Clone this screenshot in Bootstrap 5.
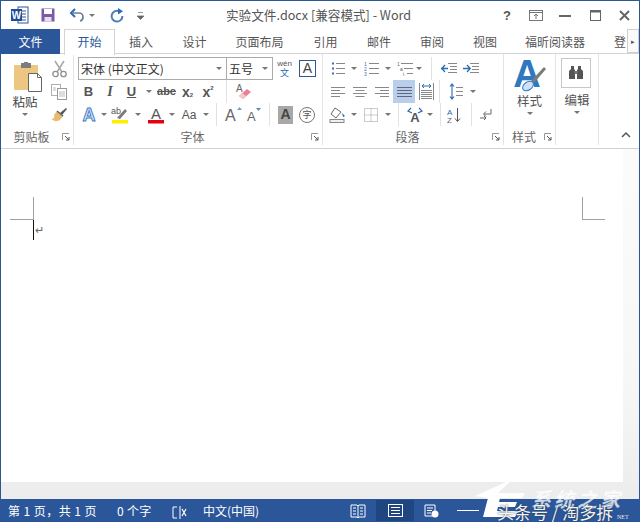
<!DOCTYPE html>
<html lang="zh-CN">
<head>
<meta charset="utf-8">
<title>实验文件.docx - Word</title>
<link rel="stylesheet" href="https://cdn.jsdelivr.net/npm/bootstrap@5.3.0/dist/css/bootstrap.min.css">
<style>
html,body{height:100%;overflow:hidden}
body{font-family:"Noto Sans CJK SC","Liberation Sans",sans-serif;font-size:12px;color:#444;background:#fff}
svg{overflow:visible;flex:none}
.win{width:640px;height:522px;border:1px solid #2b579a;border-bottom:0;position:relative;overflow:hidden;display:flex;flex-direction:column}
.ttl{height:28px;flex:none}
.qat{padding-left:10px}
.ttxt{margin-left:81px;font-size:12.6px;color:#555;width:275px;line-height:28px;white-space:nowrap}
.wctl{color:#666}
.m2{margin-left:2px}.m11{margin-left:11px}.m12{margin-left:12px}.m14{margin-left:14px}.m15{margin-left:15px}.m16{margin-left:16px}
.tabsr{height:25px;flex:none;border-bottom:1px solid #d4d4d4}
.tabsr .nav-link{padding:0;height:25px;line-height:23px;color:#555;font-size:12px;text-align:center;border:1px solid transparent;border-bottom:0;white-space:nowrap}
.tabsr .nav-link.filet{background:#2b579a;color:#fff;width:59px}
.tabsr .nav-link.act{color:#2b579a;background:#fff;border-color:#d4d4d4;height:26px;position:relative;width:51px;margin-left:4px;border-radius:0}
.t2{width:52px}.t3{width:55px}.t4{width:75px}.t5{width:50px}.t6{width:57px}.t7{width:50px}.t8{width:56px}.t9{width:90px}.t10{width:27px;text-align:left!important;padding-left:13px!important;overflow:hidden}
.tscroll{width:12px;height:24px;border:1px solid #cfcfcf;background:#fafafa;font-size:7px;line-height:22px;text-align:center;color:#555}
.ribb{height:95px;flex:none;border-bottom:1px solid #d2d2d2;background:#fff}
.rg{border-right:1px solid #e4e4e4;display:flex;flex-direction:column;flex:none;height:91px;margin-top:0;padding-top:3px}
.rg1{width:73px}.rg2{width:249px}.rg3{width:181px}.rg4{width:52px}.rg5{width:43px}
.rbody{height:71px;flex:none}
.rlab{height:17px;line-height:15px;color:#666;font-size:12px;display:flex;align-items:center;padding-right:3px}
.rlab .lt{flex:1;text-align:center}
.rw{height:23px;display:flex;align-items:center}
.cel{display:flex;align-items:center;justify-content:center;height:23px;flex:none;line-height:1;color:#555}
.car{display:block;width:0;height:0;border-left:3.5px solid transparent;border-right:3.5px solid transparent;border-top:3.5px solid #777}
.vs{display:block;width:1px;height:23px;background:#e2e2e2;flex:none}
.w2{width:2px}.w3{width:3px}.w4{width:4px}.w5{width:5px}.w6{width:6px}.w7{width:7px}.w8{width:8px}.w9{width:9px}.w10{width:10px}.w11{width:11px}.w12{width:12px}.w13{width:13px}.w14{width:14px}.w15{width:15px}.w16{width:16px}.w17{width:17px}.w18{width:18px}.w19{width:19px}.w20{width:20px}.w21{width:21px}.w22{width:22px}.w23{width:23px}.w24{width:24px}.w26{width:26px}
.pl4{padding-left:4px}.pl7{padding-left:7px}
.lat{font-family:"Liberation Sans",sans-serif}
.bld{font-weight:700;font-size:13px}
.xbig{font-weight:700;font-size:14px}
.ital{font-style:italic;font-family:"Liberation Serif",serif;font-weight:700;font-size:14px}
.und{text-decoration:underline;font-weight:700;font-size:13px}
.abc{text-decoration:line-through;font-size:11px;font-weight:700}
.sb{font-size:6px;align-self:flex-end;margin-bottom:5px}.sp{font-size:6px;align-self:flex-start;margin-top:5px}
.fb{height:23px;border:1px solid #ababab;background:#fff;display:flex;align-items:center;justify-content:space-between;padding:0 4px 0 2px;font-size:12px;color:#333;flex:none}
.fb1{width:149px}.fb2{width:47px;margin-left:-1px}
.pcol{width:38px;margin-left:5px;text-align:center}
.psvg{display:block;margin:5px 0 0 8px}
.ptxt{font-size:12.5px;color:#444;line-height:15px;margin-top:2px}
.bigt{font-size:12.5px;line-height:15px;color:#555}
.tcol{width:26px;margin-left:2px}
.jsel{background:#b8cfec}
.bgbox{width:15px;height:18px;background:#a8a8a8;color:#444;font-weight:700;font-size:14px;display:flex;align-items:center;justify-content:center;flex:none}
.circ{width:16px;height:16px;border:1px solid #777;border-radius:50%;font-size:9px;display:flex;align-items:center;justify-content:center;color:#555;flex:none}
.abox{width:17px;height:17px;border:1px solid #2b579a;color:#444;font-size:14px;display:flex;align-items:center;justify-content:center}
.ebox{width:30px;height:30px;border:1px solid #c6c6c6;margin:1px 0 4px 5px;display:flex;align-items:center;justify-content:center}
.ecol{text-align:center}
.chev{width:40px;align-self:flex-end;text-align:center;padding:0 0 6px 13px}
.mid{flex:1;min-height:0}
.docw{flex:1;min-width:0;background:#fff}
.pgm{padding:48px 18px 0 9px}
.cmk{height:23px}
.cmk1{width:24px;border-right:1px solid #a0a0a0;border-bottom:1px solid #a0a0a0}
.cmk2{width:23px;border-left:1px solid #a0a0a0;border-bottom:1px solid #a0a0a0}
.cur{margin-left:32px;height:20px;display:flex;align-items:flex-start}
.cbar{width:1px;height:20px;background:#111}
.pm{font-size:11px;color:#666;line-height:1;margin-top:5px;margin-left:1px}
.vsb{width:16px;flex:none;background:linear-gradient(#fbfbfb,#f7f7f7 70%,#eeeeee)}
.hsb{height:17px;flex:none;background:#ededed}
.stb{height:23px;flex:none;background:#2b579a;color:#fff;font-size:12px;line-height:22px;white-space:nowrap}
.s1{margin-left:7px;width:109px;letter-spacing:.45px}.s2{width:55px;letter-spacing:.3px}.s3{width:31px}.s4{width:143px}
.svw{height:21px;display:flex;align-items:center;justify-content:center}
.sv1{width:30px;justify-content:flex-start;padding-left:4px}.sv2{width:38px;background:#1f4680}.sv3{width:34px}
.zln{width:22px;height:1px;background:#fff;margin-left:9px}
.wm{position:absolute;left:478px;top:488px;width:160px;height:34px;pointer-events:none}
.wmlogo{position:absolute;left:0;top:-8px}
.wm1{position:absolute;left:52px;top:0;font-size:20px;font-style:italic;letter-spacing:3px;color:rgba(255,255,255,.75);line-height:20px;font-weight:700;white-space:nowrap}
.wm2{position:absolute;left:18px;top:13px;font-size:17px;color:#f2f2f2;line-height:20px;text-shadow:0 0 2px #234;white-space:nowrap}
.wm3{position:absolute;left:138px;top:24px;font-size:6px;color:#e8e8e8;line-height:8px;font-family:"Liberation Serif",serif}
</style>
</head>
<body>
<div class="win">
  <!-- title bar -->
  <div class="ttl d-flex align-items-center">
    <div class="qat d-flex align-items-center">
      <svg width="18" height="18" viewBox="0 0 18 18"><rect x="7" y="1" width="10" height="16" fill="#fff" stroke="#2b579a"/><path d="M10 5h5M10 8h5M10 11h5M10 14h5" stroke="#2b579a"/><rect x="0" y="3" width="11" height="12" fill="#204d95"/><text x="5.5" y="12.5" text-anchor="middle" font-size="10" font-weight="700" fill="#fff" font-family="Liberation Sans">W</text></svg>
      <svg class="m12" width="14" height="14" viewBox="0 0 14 14"><rect x=".5" y=".5" width="13" height="13" fill="#7d5aa6"/><rect x="3" y="1" width="8" height="5" fill="#fff"/><rect x="3.5" y="9" width="7" height="4.5" fill="#e6e0ee"/></svg>
      <svg class="m15" width="16" height="14" viewBox="0 0 16 14"><path d="M5 1 1 5l4 4" fill="none" stroke="#2d6cb5" stroke-width="2"/><path d="M2 5h7a4 4 0 0 1 4 4 4 4 0 0 1-3 4" fill="none" stroke="#6a7f99" stroke-width="1.7"/></svg>
      <span class="cel w8 m2"><span class="car"></span></span>
      <svg class="m14" width="14" height="15" viewBox="0 0 14 15"><path d="M9 3.2A5.4 5.4 0 1 0 12.4 8" fill="none" stroke="#4f7fae" stroke-width="2"/><path d="M8 0v6.5l5-3.2z" fill="#2d6cb5"/></svg>
      <span class="cel w10 m11"><svg width="7" height="9" viewBox="0 0 7 9"><path d="M1 1.5h5M0 5h7L3.5 8.500z" fill="#666" stroke="#666" stroke-width=".7"/></svg></span>
    </div>
    <div class="ttxt">实验文件.docx [兼容模式] - Word</div>
    <div class="wctl d-flex align-items-center">
      <span class="cel w12 lat bld">?</span>
      <span class="cel w16 m15"><svg width="14" height="11" viewBox="0 0 14 11"><rect x=".5" y=".5" width="13" height="10" fill="none" stroke="#777"/><path d="M1 2.5h12M7 9V4M5 6l2-2 2 2" stroke="#777" fill="none"/></svg></span>
      <span class="cel w14 m14"><svg width="12" height="3"><rect y="1" width="12" height="2" fill="#666"/></svg></span>
      <span class="cel w14 m16"><svg width="11" height="11"><rect x=".5" y=".5" width="10" height="10" fill="none" stroke="#666"/><rect x=".5" y=".5" width="10" height="2" fill="#666"/></svg></span>
      <span class="cel w14 m15"><svg width="11" height="11" viewBox="0 0 11 11"><path d="M1 1l9 9M10 1l-9 9" stroke="#666" stroke-width="2"/></svg></span>
    </div>
  </div>
  <!-- tabs -->
  <div class="tabsr d-flex">
    <ul class="nav flex-nowrap flex-grow-1">
      <li class="nav-item"><a class="nav-link filet" href="#">文件</a></li>
      <li class="nav-item"><a class="nav-link act" href="#">开始</a></li>
      <li class="nav-item"><a class="nav-link t2" href="#">插入</a></li>
      <li class="nav-item"><a class="nav-link t3" href="#">设计</a></li>
      <li class="nav-item"><a class="nav-link t4" href="#">页面布局</a></li>
      <li class="nav-item"><a class="nav-link t6" href="#">引用</a></li>
      <li class="nav-item"><a class="nav-link t7" href="#">邮件</a></li>
      <li class="nav-item"><a class="nav-link t8" href="#">审阅</a></li>
      <li class="nav-item"><a class="nav-link t5" href="#">视图</a></li>
      <li class="nav-item"><a class="nav-link t9" href="#">福昕阅读器</a></li>
      <li class="nav-item"><a class="nav-link t10" href="#">登</a></li>
    </ul>
    <div class="tscroll">▸</div>
  </div>
  <!-- ribbon -->
  <div class="ribb d-flex">
    <div class="rg rg1">
      <div class="rbody d-flex">
        <div class="pcol">
          <svg class="psvg" width="28" height="30" viewBox="0 0 28 30"><rect x="0" y="3" width="24" height="25" rx="1" fill="#edc682"/><rect x="7" y="1" width="10" height="5" fill="#7d7d7d"/><rect x="10" y="0" width="4" height="3" fill="#7d7d7d"/><path d="M14.500 11.500h9l4 4v14h-13z" fill="#fff" stroke="#666"/><path d="M23.500 11.500v4h4" fill="none" stroke="#666"/></svg>
          <div class="ptxt">粘贴</div>
          <div class="cel w100 h-auto pt-1"><span class="car"></span></div>
        </div>
        <div class="tcol">
          <div class="rw justify-content-center"><svg width="15" height="18" viewBox="0 0 15 18"><path d="M3 1l7 11M12 1 5 12" stroke="#a6a6a6" stroke-width="1.5"/><circle cx="3.5" cy="14" r="2.700" fill="none" stroke="#8f8f8f" stroke-width="1.3"/><circle cx="11.5" cy="14" r="2.700" fill="none" stroke="#8f8f8f" stroke-width="1.3"/></svg></div>
          <div class="rw justify-content-center"><svg width="16" height="16" viewBox="0 0 16 16"><rect x=".5" y=".5" width="9" height="11" fill="#fff" stroke="#b0b0b0"/><rect x="6.5" y="4.5" width="9" height="11" fill="#fff" stroke="#999"/><path d="M8 8h6M8 10h6M8 12h6M2 4h3M2 6h3" stroke="#bbb"/></svg></div>
          <div class="rw justify-content-center"><svg width="17" height="15" viewBox="0 0 17 15"><path d="M9 6l6-5 1 1-5 6z" fill="#555"/><path d="M6 4l6 5-3 4c-3 2-6 1-9-1 3 0 4-2 3-4z" fill="#e7bb6e"/><path d="M6 4l6 5" stroke="#666" stroke-width="1.5"/></svg></div>
        </div>
      </div>
      <div class="rlab"><span class="lt">剪贴板</span><svg width="8" height="8" viewBox="0 0 8 8"><path d="M.5 7V.5H7" fill="none" stroke="#999"/><path d="M3 3l4 4M7 4v3H4" fill="none" stroke="#555"/></svg></div>
    </div>

    <div class="rg rg2">
      <div class="rbody pl4">
        <div class="rw">
          <div class="fb fb1"><span>宋体 (中文正文)</span><span class="car"></span></div>
          <div class="fb fb2"><span>五号</span><span class="car"></span></div>
          <span class="cel w3"></span>
          <span class="cel w17"><svg width="17" height="19" viewBox="0 0 17 19"><text x="8.5" y="7" text-anchor="middle" font-size="8" fill="#555" font-family="Liberation Sans">wén</text><text x="8.5" y="17" text-anchor="middle" font-size="9" fill="#2b6cb0">文</text></svg></span>
          <span class="cel w6"></span>
          <span class="abox lat">A</span>
        </div>
        <div class="rw">
          <span class="cel w21 lat bld">B</span>
          <span class="cel w22 ital">I</span>
          <span class="cel w21 lat und">U</span>
          <span class="cel w14"><span class="car"></span></span>
          <span class="cel w21 lat abc">abc</span>
          <span class="cel w21 lat xbig"><span>x</span><span class="sb">2</span></span>
          <span class="cel w20 lat xbig"><span>x</span><span class="sp">2</span></span>
          <span class="cel w8"></span><span class="vs"></span>
          <span class="cel w9"></span>
          <svg width="16" height="17" viewBox="0 0 16 17"><text x="0" y="9" font-size="10" fill="#666" font-family="Liberation Sans">A</text><path d="M3 13l8-7 4 3-8 7z" fill="#ec7f95"/><path d="M3 13l3-3 4 3-3 3z" fill="#f6c5cf"/></svg>
        </div>
        <div class="rw">
          <span class="cel w21"><svg width="16" height="18" viewBox="0 0 16 18"><text x="8" y="15" text-anchor="middle" font-size="18" font-weight="700" fill="#cfe0f4" stroke="#3f7cc2" stroke-width=".9" font-family="Liberation Sans">A</text></svg></span>
          <span class="cel w9"><span class="car"></span></span>
          <span class="cel w24"><svg width="18" height="18" viewBox="0 0 18 18"><text x="0" y="8" font-size="9" fill="#555" font-family="Liberation Sans">ab</text><path d="M6 12 14 3l2 2-7 8z" fill="#7a7a7a"/><rect x="1" y="14" width="16" height="3.500" fill="#ffef00"/></svg></span>
          <span class="cel w12"><span class="car"></span></span>
          <span class="cel w24"><svg width="16" height="18" viewBox="0 0 16 18"><text x="8" y="13" text-anchor="middle" font-size="15" fill="#555" font-family="Liberation Sans">A</text><rect y="14" width="16" height="3.500" fill="#e60012"/></svg></span>
          <span class="cel w8"><span class="car"></span></span>
          <span class="cel w26 lat">Aa</span>
          <span class="cel w7"><span class="car"></span></span>
          <span class="cel w7"></span><span class="vs"></span>
          <span class="cel w5"></span>
          <span class="cel w22"><svg width="17" height="17" viewBox="0 0 17 17"><text x="0" y="15" font-size="16" fill="#666" font-family="Liberation Sans">A</text><path d="M12 4l2.500-3 2.500 3z" fill="#7a9cc6"/></svg></span>
          <span class="cel w20"><svg width="14" height="15" viewBox="0 0 14 15"><text x="0" y="14" font-size="13" fill="#666" font-family="Liberation Sans">A</text><path d="M9 1h5l-2.500 3z" fill="#6a86aa"/></svg></span>
          <span class="cel w5"></span><span class="vs"></span>
          <span class="cel w8"></span><span class="bgbox lat">A</span>
          <span class="cel w6"></span><span class="circ">字</span>
        </div>
      </div>
      <div class="rlab"><span class="lt">字体</span><svg width="8" height="8" viewBox="0 0 8 8"><path d="M.5 7V.5H7" fill="none" stroke="#999"/><path d="M3 3l4 4M7 4v3H4" fill="none" stroke="#555"/></svg></div>
    </div>

    <div class="rg rg3">
      <div class="rbody pl7">
        <div class="rw">
          <span class="cel w16"><svg width="14" height="14" viewBox="0 0 14 14"><path d="M1 1.500h2M1 6.500h2M1 11.500h2" stroke="#3b6fb0" stroke-width="2"/><path d="M5 1.500h9M5 6.500h9M5 11.500h9" stroke="#888"/></svg></span>
          <span class="cel w16"><span class="car"></span></span>
          <span class="cel w18"><svg width="15" height="15" viewBox="0 0 15 15"><text x="0" y="5" font-size="5" fill="#3b6fb0" font-family="Liberation Sans">1</text><text x="0" y="10" font-size="5" fill="#3b6fb0" font-family="Liberation Sans">2</text><text x="0" y="15" font-size="5" fill="#3b6fb0" font-family="Liberation Sans">3</text><path d="M5 2.500h10M5 7.500h10M5 12.500h10" stroke="#888"/></svg></span>
          <span class="cel w16"><span class="car"></span></span>
          <span class="cel w18"><svg width="16" height="15" viewBox="0 0 16 15"><text x="0" y="5" font-size="5" fill="#3b6fb0" font-family="Liberation Sans">1</text><text x="3" y="10" font-size="5" fill="#555" font-family="Liberation Sans">a</text><text x="6" y="15" font-size="5" fill="#555" font-family="Liberation Sans">i</text><path d="M4 2.500h12M7 7.500h9M10 12.500h6" stroke="#888"/></svg></span>
          <span class="cel w10"><span class="car"></span></span>
          <span class="cel w7"></span><span class="vs"></span>
          <span class="cel w8"></span>
          <span class="cel w17"><svg width="16" height="13" viewBox="0 0 16 13"><path d="M7 1.500h9M9 4.500h7M9 7.500h7M7 10.500h9" stroke="#888"/><path d="M0 6.500h7M4 3 .8 6.500 4 10" fill="none" stroke="#2b6cb0" stroke-width="1.300"/></svg></span>
          <span class="cel w5"></span>
          <span class="cel w17"><svg width="16" height="13" viewBox="0 0 16 13"><path d="M7 1.500h9M9 4.500h7M9 7.500h7M7 10.500h9" stroke="#888"/><path d="M0 6.500h7M4 3l3.200 3.500L4 10" fill="none" stroke="#2b6cb0" stroke-width="1.300"/></svg></span>
        </div>
        <div class="rw">
          <span class="cel w16"><svg width="14" height="11" viewBox="0 0 14 11"><path d="M0 1.500h14M0 4.500h9M0 7.500h14M0 10.500h9" stroke="#888"/></svg></span>
          <span class="cel w6"></span>
          <span class="cel w16"><svg width="14" height="11" viewBox="0 0 14 11"><path d="M0 1.500h14M2.500 4.500h9M0 7.500h14M2.500 10.500h9" stroke="#888"/></svg></span>
          <span class="cel w6"></span>
          <span class="cel w16"><svg width="14" height="11" viewBox="0 0 14 11"><path d="M0 1.500h14M5 4.500h9M0 7.500h14M5 10.500h9" stroke="#888"/></svg></span>
          <span class="cel w3"></span>
          <span class="cel w22 jsel"><svg width="15" height="11" viewBox="0 0 15 11"><path d="M0 1.500h15M0 4.500h15M0 7.500h15M0 10.500h15" stroke="#667"/></svg></span>
          <span class="cel w22"><svg width="15" height="17" viewBox="0 0 15 17"><path d="M.5 0v17M14.500 0v17" stroke="#888"/><path d="M3 3h9M5 1 3 3l2 2M10 1l2 2-2 2" fill="none" stroke="#2b6cb0"/><path d="M2 7.500h11M2 9.500h11M2 11.500h11M2 13.500h11M2 15.500h11" stroke="#888"/></svg></span>
          <span class="cel w2"></span><span class="vs"></span>
          <span class="cel w8"></span>
          <span class="cel w16"><svg width="14" height="17" viewBox="0 0 14 17"><path d="M3 1v15M1 3.500 3 1l2 2.500M1 13.500 3 16l2-2.500" fill="none" stroke="#2b6cb0" stroke-width="1.100"/><path d="M7 4.500h7M7 8.500h7M7 12.500h7" stroke="#888"/></svg></span>
          <span class="cel w5"></span>
          <span class="cel w8"><span class="car"></span></span>
        </div>
        <div class="rw">
          <span class="cel w16"><svg width="17" height="16" viewBox="0 0 17 16"><path d="M5 1 1 7l5 4 5-6z" fill="#fff" stroke="#666"/><path d="M12 6l3 3-2 1z" fill="#2b6cb0"/><rect x="0" y="12.500" width="14" height="3" fill="#f0f0f0" stroke="#888"/></svg></span>
          <span class="cel w16"><span class="car"></span></span>
          <span class="cel w18"><svg width="14" height="14" viewBox="0 0 14 14"><rect x=".5" y=".5" width="13" height="13" fill="none" stroke="#999" stroke-dasharray="1 1"/><path d="M7 .5v13M.5 7h13" stroke="#999" stroke-dasharray="1 1"/></svg></span>
          <span class="cel w16"><span class="car"></span></span>
          <span class="cel w2"></span><span class="vs"></span>
          <span class="cel w7"></span>
          <span class="cel w17"><svg width="18" height="14" viewBox="0 0 18 14"><text x="9" y="14" text-anchor="middle" font-size="13" font-weight="700" fill="#555" font-family="Liberation Sans">A</text><path d="M6 5 2 3l3-3M12 5l4-2-3-3" fill="none" stroke="#2b6cb0" stroke-width="1.200"/></svg></span>
          <span class="cel w14"><span class="car"></span></span>
          <span class="cel w3"></span><span class="vs"></span>
          <span class="cel w5"></span>
          <span class="cel w16"><svg width="15" height="16" viewBox="0 0 15 16"><text x="0" y="7.500" font-size="8" fill="#2b6cb0" font-family="Liberation Sans">A</text><text x="0" y="15.500" font-size="8" fill="#666" font-family="Liberation Sans">Z</text><path d="M10.500 1v13M8 11.500l2.500 3 2.500-3" fill="none" stroke="#555"/></svg></span>
          <span class="cel w9"></span><span class="vs"></span>
          <span class="cel w6"></span>
          <span class="cel w14"><svg width="13" height="14" viewBox="0 0 13 14"><path d="M12 1v5H5M7 3.500 4.500 6 7 8.500" fill="none" stroke="#666"/><path d="M1 10h6M5 8l2 2-2 2" fill="none" stroke="#666"/></svg></span>
        </div>
      </div>
      <div class="rlab"><span class="lt">段落</span><svg width="8" height="8" viewBox="0 0 8 8"><path d="M.5 7V.5H7" fill="none" stroke="#999"/><path d="M3 3l4 4M7 4v3H4" fill="none" stroke="#555"/></svg></div>
    </div>

    <div class="rg rg4">
      <div class="rbody ecol">
        <svg width="34" height="36" viewBox="0 0 34 36"><text x="14" y="30" text-anchor="middle" font-size="38" font-weight="700" fill="#2f77bf" font-family="Liberation Sans">A</text><path d="M18 24 31 10l2 2-12 14z" fill="#7b7b7b"/><ellipse cx="15" cy="29" rx="6" ry="4" transform="rotate(-35 15 29)" fill="#cfe0f4" stroke="#2f77bf"/></svg>
        <div class="bigt">样式</div>
        <div class="cel pt-1 h-auto"><span class="car"></span></div>
      </div>
      <div class="rlab"><span class="lt">样式</span><svg width="8" height="8" viewBox="0 0 8 8"><path d="M.5 7V.5H7" fill="none" stroke="#999"/><path d="M3 3l4 4M7 4v3H4" fill="none" stroke="#555"/></svg></div>
    </div>

    <div class="rg rg5">
      <div class="rbody ecol">
        <div class="ebox"><svg width="16" height="14" viewBox="0 0 16 14"><path d="M3 0h3v3l1 1v9H1V5l2-2zM10 0h3v3l2 2v8H9V4l1-1z" fill="#555"/><rect x="6.500" y="5" width="3" height="3" fill="#777"/></svg></div>
        <div class="bigt">编辑</div>
        <div class="cel pt-1 h-auto"><span class="car"></span></div>
      </div>
    </div>
    <div class="chev"><svg width="10" height="6" viewBox="0 0 10 6"><path d="M1 5l4-4 4 4" fill="none" stroke="#555" stroke-width="1.500"/></svg></div>
  </div>

  <!-- document -->
  <div class="mid d-flex">
    <div class="docw d-flex flex-column">
      <div class="flex-grow-1">
        <div class="pgm d-flex justify-content-between">
          <div class="cmk cmk1"></div>
          <div class="cmk cmk2"></div>
        </div>
        <div class="cur"><span class="cbar"></span><span class="pm lat">↵</span></div>
      </div>
    </div>
    <div class="vsb"></div>
  </div>
  <div class="hsb"></div>

  <!-- status bar -->
  <div class="stb d-flex align-items-center">
    <span class="s1">第 1 页，共 1 页</span>
    <span class="s2">0 个字</span>
    <span class="s3"><svg width="15" height="13" viewBox="0 0 15 13"><path d="M5 1H1v11h4M8 0v13" fill="none" stroke="#fff"/><path d="M10 3l4 7M14 3l-4 7" stroke="#fff" stroke-width="1.200"/></svg></span>
    <span class="s4">中文(中国)</span>
    <div class="svw sv1"><svg width="16" height="14" viewBox="0 0 16 14"><path d="M1 1h6l1 1 1-1h6v12H9l-1 1-1-1H1z" fill="none" stroke="#fff"/><path d="M8 2v11M3 4h3M3 7h3M3 10h3M10 4h3M10 7h3M10 10h3" stroke="#fff"/></svg></div>
    <div class="svw sv2"><svg width="15" height="13" viewBox="0 0 15 13"><rect x=".5" y=".5" width="14" height="12" fill="none" stroke="#fff"/><path d="M3 3.500h9M3 6.500h9M3 9.500h9" stroke="#fff"/></svg></div>
    <div class="svw sv3"><svg width="15" height="14" viewBox="0 0 15 14"><path d="M8 12H1V1h10v6" fill="none" stroke="#fff"/><path d="M3 4h6M3 6.500h5M3 9h4" stroke="#fff"/><circle cx="11" cy="10" r="3.500" fill="#fff"/></svg></div>
    <div class="zln"></div>
  </div>

  <div class="wm">
    <svg class="wmlogo" width="50" height="42" viewBox="0 0 50 42"><path d="M-4 15 34-2 19 12h27l-3 5H21l-1 4h18l-2 5H19l-1 4h21l-3 6H4l5-19z" fill="#fff"/></svg>
    <span class="wm1">系统之家</span>
    <span class="wm2">头条号 / 淘多拆</span>
    <span class="wm3">NET</span>
  </div>
</div>
<script src="https://cdn.jsdelivr.net/npm/bootstrap@5.3.0/dist/js/bootstrap.bundle.min.js"></script>
</body>
</html>
